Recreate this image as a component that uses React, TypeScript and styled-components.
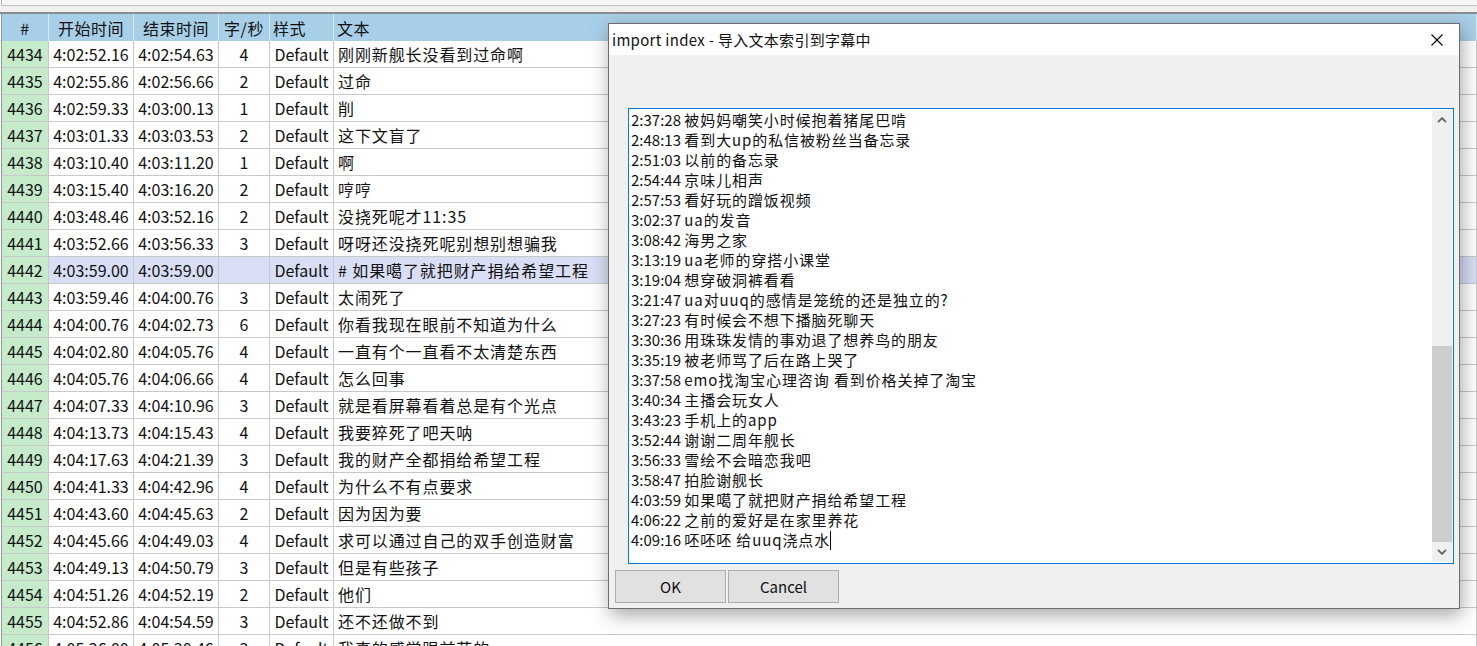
import styled, { createGlobalStyle } from "styled-components";

const GlobalStyle = createGlobalStyle`
  html, body {
    margin: 0;
    padding: 0;
    background: #fff;
    overflow: hidden;
  }
  body {
    font-family: "Noto Sans CJK SC", "Noto Sans", sans-serif;
    color: #000;
  }
`;

type Row = [string, string, string, string, string, string];

const rows: Row[] = [
  ["4434", "4:02:52.16", "4:02:54.63", "4", "Default", "刚刚新舰长没看到过命啊"],
  ["4435", "4:02:55.86", "4:02:56.66", "2", "Default", "过命"],
  ["4436", "4:02:59.33", "4:03:00.13", "1", "Default", "削"],
  ["4437", "4:03:01.33", "4:03:03.53", "2", "Default", "这下文盲了"],
  ["4438", "4:03:10.40", "4:03:11.20", "1", "Default", "啊"],
  ["4439", "4:03:15.40", "4:03:16.20", "2", "Default", "哼哼"],
  ["4440", "4:03:48.46", "4:03:52.16", "2", "Default", "没挠死呢才11:35"],
  ["4441", "4:03:52.66", "4:03:56.33", "3", "Default", "呀呀还没挠死呢别想别想骗我"],
  ["4442", "4:03:59.00", "4:03:59.00", "", "Default", "# 如果噶了就把财产捐给希望工程"],
  ["4443", "4:03:59.46", "4:04:00.76", "3", "Default", "太闹死了"],
  ["4444", "4:04:00.76", "4:04:02.73", "6", "Default", "你看我现在眼前不知道为什么"],
  ["4445", "4:04:02.80", "4:04:05.76", "4", "Default", "一直有个一直看不太清楚东西"],
  ["4446", "4:04:05.76", "4:04:06.66", "4", "Default", "怎么回事"],
  ["4447", "4:04:07.33", "4:04:10.96", "3", "Default", "就是看屏幕看着总是有个光点"],
  ["4448", "4:04:13.73", "4:04:15.43", "4", "Default", "我要猝死了吧天呐"],
  ["4449", "4:04:17.63", "4:04:21.39", "3", "Default", "我的财产全都捐给希望工程"],
  ["4450", "4:04:41.33", "4:04:42.96", "4", "Default", "为什么不有点要求"],
  ["4451", "4:04:43.60", "4:04:45.63", "2", "Default", "因为因为要"],
  ["4452", "4:04:45.66", "4:04:49.03", "4", "Default", "求可以通过自己的双手创造财富"],
  ["4453", "4:04:49.13", "4:04:50.79", "3", "Default", "但是有些孩子"],
  ["4454", "4:04:51.26", "4:04:52.19", "2", "Default", "他们"],
  ["4455", "4:04:52.86", "4:04:54.59", "3", "Default", "还不还做不到"],
  ["4456", "4:05:26.00", "4:05:30.46", "3", "Default", "我真的感觉眼前花的"],
];

const lines: [string, string][] = [
  ["2:37:28", "被妈妈嘲笑小时候抱着猪尾巴啃"],
  ["2:48:13", "看到大up的私信被粉丝当备忘录"],
  ["2:51:03", "以前的备忘录"],
  ["2:54:44", "京味儿相声"],
  ["2:57:53", "看好玩的蹭饭视频"],
  ["3:02:37", "ua的发音"],
  ["3:08:42", "海男之家"],
  ["3:13:19", "ua老师的穿搭小课堂"],
  ["3:19:04", "想穿破洞裤看看"],
  ["3:21:47", "ua对uuq的感情是笼统的还是独立的?"],
  ["3:27:23", "有时候会不想下播脑死聊天"],
  ["3:30:36", "用珠珠发情的事劝退了想养鸟的朋友"],
  ["3:35:19", "被老师骂了后在路上哭了"],
  ["3:37:58", "emo找淘宝心理咨询 看到价格关掉了淘宝"],
  ["3:40:34", "主播会玩女人"],
  ["3:43:23", "手机上的app"],
  ["3:52:44", "谢谢二周年舰长"],
  ["3:56:33", "雪绘不会暗恋我吧"],
  ["3:58:47", "拍脸谢舰长"],
  ["4:03:59", "如果噶了就把财产捐给希望工程"],
  ["4:06:22", "之前的爱好是在家里养花"],
  ["4:09:16", "呸呸呸 给uuq浇点水"],
];

const COLS = "47px 85px 85px 51px 64px 1fr";

export default function App() {
  return (
    <Page>
      <GlobalStyle />
      <TopBar />
      <TopGap />
      <Table>
        <HeaderRow>
          <HeadCell>#</HeadCell>
          <HeadCell>开始时间</HeadCell>
          <HeadCell>结束时间</HeadCell>
          <HeadCell>字/秒</HeadCell>
          <HeadCell $left>样式</HeadCell>
          <HeadCell $left>文本</HeadCell>
        </HeaderRow>
        {rows.map((r) => (
          <BodyRow key={r[0]} $selected={r[0] === "4442"}>
            <NumCell>{r[0]}</NumCell>
            <Cell>{r[1]}</Cell>
            <Cell>{r[2]}</Cell>
            <Cell>{r[3]}</Cell>
            <Cell>{r[4]}</Cell>
            <TextCell>{r[5]}</TextCell>
          </BodyRow>
        ))}
      </Table>

      <Dialog>
        <TitleBar>
          <Title>import index - 导入文本索引到字幕中</Title>
          <CloseButton>
            <svg width="12" height="12" viewBox="0 0 12 12">
              <path d="M0.5 0.5 L11.5 11.5 M11.5 0.5 L0.5 11.5" stroke="#000" strokeWidth="1.1" />
            </svg>
          </CloseButton>
        </TitleBar>
        <DialogBody>
          <TextBox>
            <Lines>
              {lines.map(([t, s], i) => (
                <Line key={t}>
                  {t} <Phrase>{s}</Phrase>
                  {i === lines.length - 1 && <Caret />}
                </Line>
              ))}
            </Lines>
            <ScrollBar>
              <ArrowButton>
                <svg width="10" height="6" viewBox="0 0 10 6">
                  <path d="M1 5.2 L5 1.2 L9 5.2" fill="none" stroke="#606060" strokeWidth="1.8" />
                </svg>
              </ArrowButton>
              <Track>
                <Thumb />
              </Track>
              <ArrowButton>
                <svg width="10" height="6" viewBox="0 0 10 6">
                  <path d="M1 0.8 L5 4.8 L9 0.8" fill="none" stroke="#606060" strokeWidth="1.8" />
                </svg>
              </ArrowButton>
            </ScrollBar>
          </TextBox>
          <ButtonRow>
            <Button>OK</Button>
            <Button>Cancel</Button>
          </ButtonRow>
        </DialogBody>
      </Dialog>
    </Page>
  );
}

const Page = styled.div`
  position: relative;
  width: 1477px;
  height: 646px;
  overflow: hidden;
  background: #fff;
`;

const TopBar = styled.div`
  height: 5px;
  background: #f7f7f7;
  border-left: 1px solid #b0b0b0;
  margin-left: 1px;
  border-bottom: 1px solid #c4c4c4;
`;

const TopGap = styled.div`
  height: 6px;
  background: #f0f0f0;
  border-bottom: 2px solid #8c8c8c;
`;

const Table = styled.div`
  margin-left: 1px;
  border-left: 1px solid #9a9a9a;
  font-size: 16px;
  color: #111;
`;

const HeaderRow = styled.div`
  display: grid;
  grid-template-columns: ${COLS};
  height: 27px;
  background: #a8cfe8;
`;

const HeadCell = styled.div<{ $left?: boolean }>`
  display: flex;
  align-items: center;
  justify-content: ${({ $left }) => ($left ? "flex-start" : "center")};
  padding: 0 ${({ $left }) => ($left ? "3px" : "0")};
  border-right: 1px solid #d6e7f3;
  white-space: nowrap;
  overflow: hidden;
  letter-spacing: 0.5px;
`;

const BodyRow = styled.div<{ $selected?: boolean }>`
  display: grid;
  grid-template-columns: ${COLS};
  height: 27px;
  box-sizing: border-box;
  border-bottom: 1px solid #c8c8c8;
  background: ${({ $selected }) => ($selected ? "#d8def5" : "#fff")};
`;

const Cell = styled.div`
  display: flex;
  align-items: center;
  justify-content: center;
  border-right: 1px solid #c8c8c8;
  white-space: nowrap;
  overflow: hidden;
`;

const NumCell = styled(Cell)`
  background: #c6ebca;
`;

const TextCell = styled(Cell)`
  justify-content: flex-start;
  padding: 0 4px;
  letter-spacing: 0.9px;
`;

const Dialog = styled.div`
  position: absolute;
  left: 608px;
  top: 23px;
  width: 852px;
  height: 586px;
  box-sizing: border-box;
  border: 1px solid #6e6e6e;
  display: flex;
  flex-direction: column;
  background: #f0f0f0;
  box-shadow: 2px 6px 18px rgba(0, 0, 0, 0.35);
`;

const TitleBar = styled.div`
  height: 31px;
  flex: none;
  display: flex;
  align-items: center;
  background: #fff;
  padding-left: 3px;
`;

const Title = styled.div`
  flex: 1;
  font-size: 15px;
  letter-spacing: 0.3px;
  white-space: nowrap;
  color: #111;
`;

const CloseButton = styled.div`
  width: 44px;
  height: 31px;
  display: flex;
  align-items: center;
  justify-content: center;
`;

const DialogBody = styled.div`
  flex: 1;
  display: flex;
  flex-direction: column;
  padding: 53px 5px 5px 6px;
`;

const TextBox = styled.div`
  margin-left: 13px;
  height: 456px;
  box-sizing: border-box;
  border: 1px solid #0078d7;
  padding: 1px;
  background: #fff;
  display: flex;
`;

const Lines = styled.div`
  flex: 1;
  padding-left: 1px;
  font-size: 15px;
  line-height: 20px;
  color: #111;
  overflow: hidden;
`;

const Line = styled.div`
  white-space: nowrap;
  height: 20px;
`;

const Phrase = styled.span`
  letter-spacing: 0.9px;
`;

const Caret = styled.span`
  display: inline-block;
  width: 1px;
  height: 19px;
  background: #000;
  vertical-align: -4px;
`;

const ScrollBar = styled.div`
  width: 20px;
  display: flex;
  flex-direction: column;
  background: #f0f0f0;
`;

const ArrowButton = styled.div`
  height: 20px;
  flex: none;
  display: flex;
  align-items: center;
  justify-content: center;
`;

const Track = styled.div`
  flex: 1;
  display: flex;
  flex-direction: column;
  justify-content: flex-end;
`;

const Thumb = styled.div`
  height: 196px;
  background: #cdcdcd;
`;

const ButtonRow = styled.div`
  display: flex;
  gap: 2px;
  margin-top: 6px;
`;

const Button = styled.div`
  width: 111px;
  height: 33px;
  box-sizing: border-box;
  border: 1px solid #adadad;
  background: #e1e1e1;
  display: flex;
  align-items: center;
  justify-content: center;
  font-size: 15px;
  color: #111;
`;
